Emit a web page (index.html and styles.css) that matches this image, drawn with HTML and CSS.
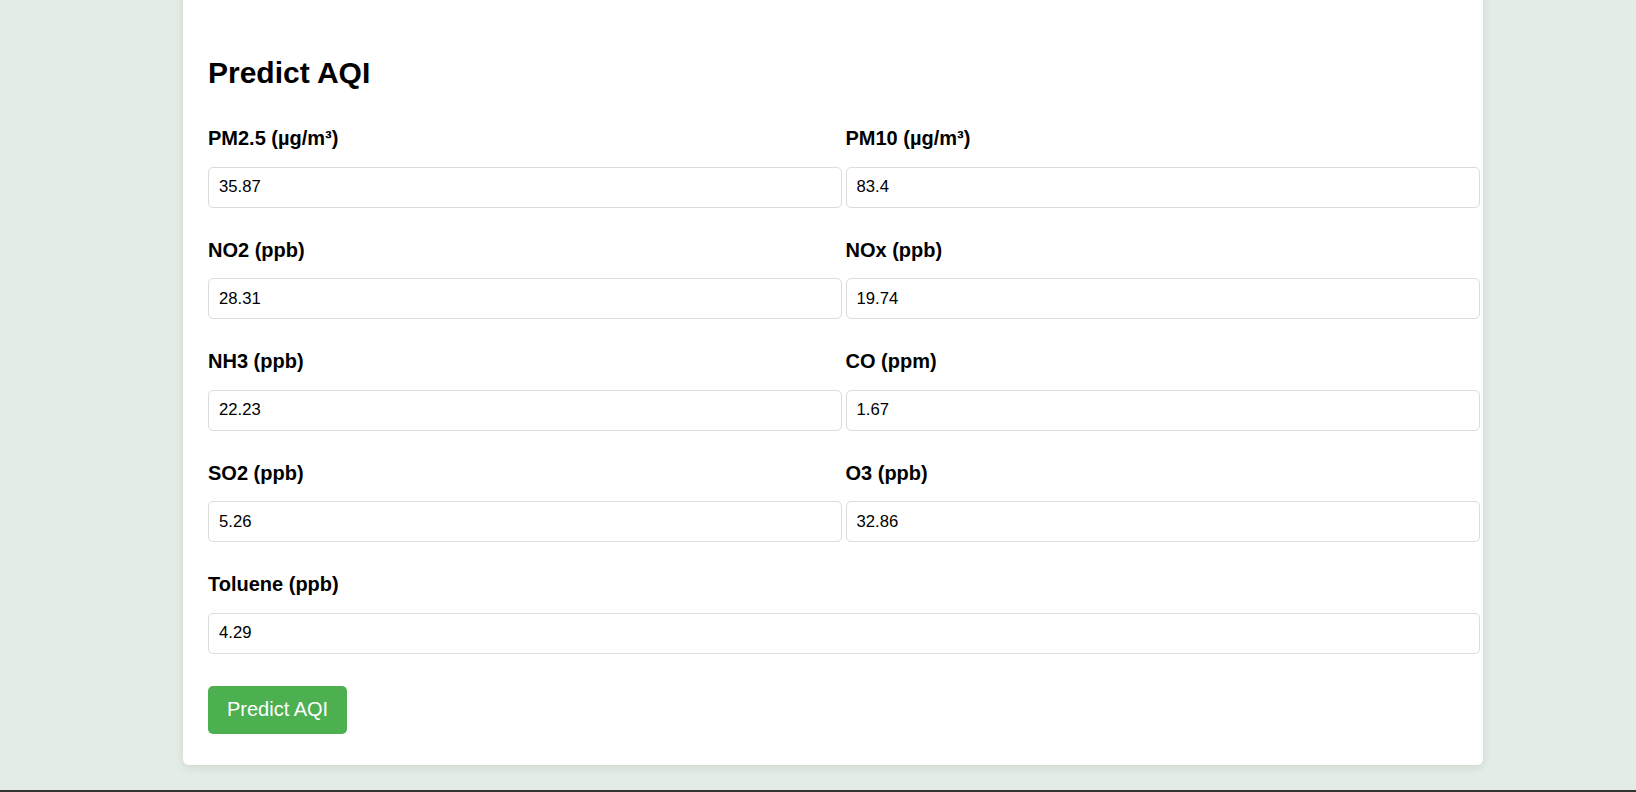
FILE: index.html
```html
<!DOCTYPE html>
<html lang="en">
<head>
<meta charset="utf-8">
<title>Predict AQI</title>
<link rel="stylesheet" href="styles.css">
</head>
<body>
<div class="page">
  <main class="card">
    <h2 class="title">Predict AQI</h2>
    <form class="form" onsubmit="return false;">
      <div class="grid">
        <div class="group">
          <label class="label" for="pm25">PM2.5 (µg/m³)</label>
          <input class="input" id="pm25" type="text" value="35.87">
        </div>
        <div class="group">
          <label class="label" for="pm10">PM10 (µg/m³)</label>
          <input class="input" id="pm10" type="text" value="83.4">
        </div>
        <div class="group">
          <label class="label" for="no2">NO2 (ppb)</label>
          <input class="input" id="no2" type="text" value="28.31">
        </div>
        <div class="group">
          <label class="label" for="nox">NOx (ppb)</label>
          <input class="input" id="nox" type="text" value="19.74">
        </div>
        <div class="group">
          <label class="label" for="nh3">NH3 (ppb)</label>
          <input class="input" id="nh3" type="text" value="22.23">
        </div>
        <div class="group">
          <label class="label" for="co">CO (ppm)</label>
          <input class="input" id="co" type="text" value="1.67">
        </div>
        <div class="group">
          <label class="label" for="so2">SO2 (ppb)</label>
          <input class="input" id="so2" type="text" value="5.26">
        </div>
        <div class="group">
          <label class="label" for="o3">O3 (ppb)</label>
          <input class="input" id="o3" type="text" value="32.86">
        </div>
        <div class="group group-wide">
          <label class="label" for="toluene">Toluene (ppb)</label>
          <input class="input" id="toluene" type="text" value="4.29">
        </div>
      </div>
      <button class="btn" type="submit">Predict AQI</button>
    </form>
  </main>
  <footer class="footer"></footer>
</div>
</body>
</html>
```

FILE: styles.css
```css
* {
  box-sizing: border-box;
}

html, body {
  margin: 0;
  padding: 0;
}

body {
  background: #e3ede5;
  font-family: "Liberation Sans", Arial, sans-serif;
  color: #000;
  overflow: hidden;
}

.page {
  display: flex;
  flex-direction: column;
  height: 792px;
}

.card {
  width: 1300px;
  margin: -20px 0 0 183px;
  padding: 75px 25px 31.5px 25px;
  background: #fff;
  border-radius: 6px;
  box-shadow: 0 2px 10px rgba(0, 0, 0, 0.1);
}

.title {
  margin: 0 0 37.3px 0;
  font-size: 30px;
  line-height: 35px;
  font-weight: bold;
  color: #000;
}

.form {
  margin: 0;
}

.grid {
  display: grid;
  grid-template-columns: 1fr 1fr;
  column-gap: 25px;
  row-gap: 30.8px;
}

.group {
  display: flex;
  flex-direction: column;
  align-items: flex-start;
  min-width: 0;
}

.group-wide {
  grid-column: 1 / -1;
}

.label {
  display: block;
  font-size: 20px;
  line-height: 23px;
  font-weight: bold;
  margin-bottom: 16.7px;
}

.input {
  width: calc(100% + 21.5px);
  height: 41px;
  padding: 0 10px;
  border: 1px solid #dcdcdc;
  border-radius: 5px;
  font-family: "Liberation Sans", Arial, sans-serif;
  font-size: 16.67px;
  color: #000;
  background: #fff;
  outline: none;
}

.btn {
  display: block;
  margin-top: 32px;
  padding: 12.3px 19px;
  border: none;
  border-radius: 5px;
  background: #4caf50;
  color: #fff;
  font-family: "Liberation Sans", Arial, sans-serif;
  font-size: 20px;
  line-height: 23px;
  cursor: pointer;
}

.footer {
  margin-top: auto;
  height: 2px;
  background: #333;
}
```
